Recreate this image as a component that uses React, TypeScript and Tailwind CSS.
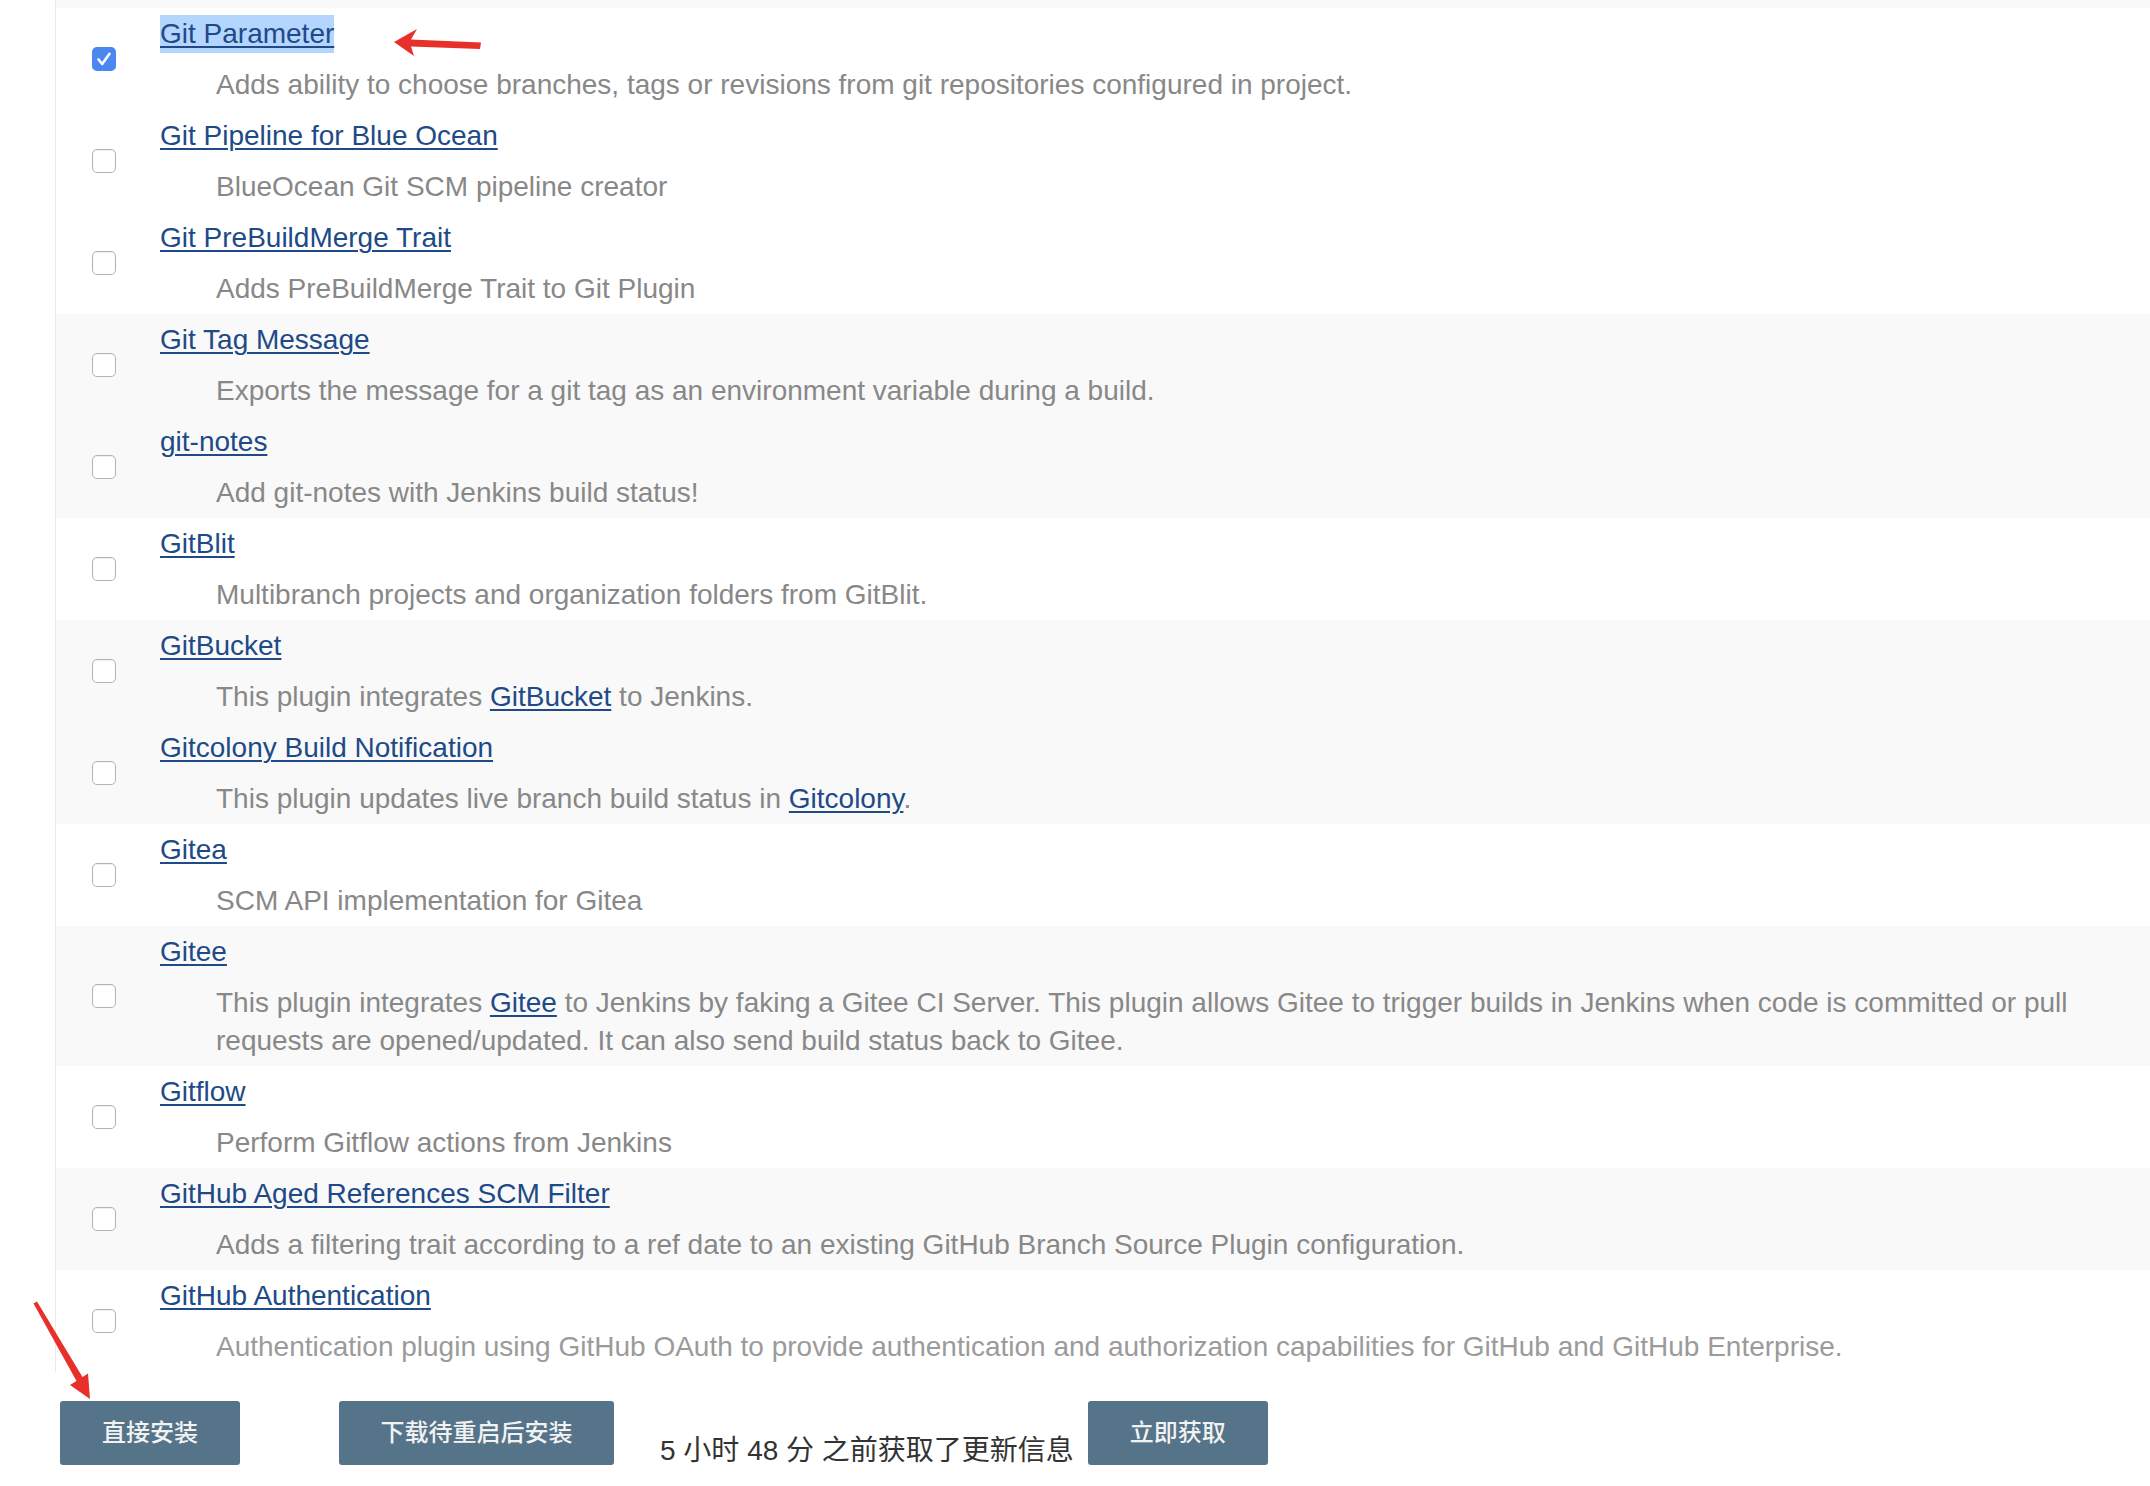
import React from "react";

type Row = {
  name: string;
  desc: React.ReactNode;
  grey?: boolean;
  checked?: boolean;
  highlight?: boolean;
  faded?: boolean;
};

function L({ children }: { children: React.ReactNode }) {
  return (
    <a href="#" className="text-[#204a87] underline decoration-[2px] underline-offset-[3px]">
      {children}
    </a>
  );
}

const rows: Row[] = [
  {
    name: "Git Parameter",
    desc: "Adds ability to choose branches, tags or revisions from git repositories configured in project.",
    checked: true,
    highlight: true,
  },
  { name: "Git Pipeline for Blue Ocean", desc: "BlueOcean Git SCM pipeline creator" },
  { name: "Git PreBuildMerge Trait", desc: "Adds PreBuildMerge Trait to Git Plugin" },
  {
    name: "Git Tag Message",
    desc: "Exports the message for a git tag as an environment variable during a build.",
    grey: true,
  },
  { name: "git-notes", desc: "Add git-notes with Jenkins build status!", grey: true },
  { name: "GitBlit", desc: "Multibranch projects and organization folders from GitBlit." },
  {
    name: "GitBucket",
    desc: (
      <>
        This plugin integrates <L>GitBucket</L> to Jenkins.
      </>
    ),
    grey: true,
  },
  {
    name: "Gitcolony Build Notification",
    desc: (
      <>
        This plugin updates live branch build status in <L>Gitcolony</L>.
      </>
    ),
    grey: true,
  },
  { name: "Gitea", desc: "SCM API implementation for Gitea" },
  {
    name: "Gitee",
    desc: (
      <>
        This plugin integrates <L>Gitee</L> to Jenkins by faking a Gitee CI Server. This plugin allows Gitee to
        trigger builds in Jenkins when code is committed or pull
        <br />
        requests are opened/updated. It can also send build status back to Gitee.
      </>
    ),
    grey: true,
  },
  { name: "Gitflow", desc: "Perform Gitflow actions from Jenkins" },
  {
    name: "GitHub Aged References SCM Filter",
    desc: "Adds a filtering trait according to a ref date to an existing GitHub Branch Source Plugin configuration.",
    grey: true,
  },
  {
    name: "GitHub Authentication",
    desc: "Authentication plugin using GitHub OAuth to provide authentication and authorization capabilities for GitHub and GitHub Enterprise.",
    faded: true,
  },
];

function Checkbox({ checked }: { checked?: boolean }) {
  if (checked) {
    return (
      <div className="w-6 h-6 rounded-[5px] bg-[#4a88f0] flex items-center justify-center">
        <svg width="20" height="20" viewBox="0 0 20 20" fill="none">
          <path d="M4.5 10.5 L8.2 15 L15.5 4.8" stroke="white" strokeWidth="2.6" strokeLinecap="round" strokeLinejoin="round" />
        </svg>
      </div>
    );
  }
  return <div className="w-6 h-6 rounded-[5px] border border-[#b3b3b3] bg-white shadow-[inset_0_1px_1px_rgba(0,0,0,0.06)]" />;
}

export default function App() {
  return (
    <div className="relative min-h-screen bg-white font-['Liberation_Sans','Noto_Sans_CJK_SC',sans-serif] text-[28px] leading-[38px]">
      <div className="ml-[55px] border-l border-[#e8e8e8]">
        <div className="h-[8px] bg-[#f9f9f9]" />
        {rows.map((r) => (
          <div key={r.name} className={`flex items-center ${r.grey ? "bg-[#f9f9f9]" : "bg-white"}`}>
            <div className="w-[104px] pl-[36px] shrink-0">
              <Checkbox checked={r.checked} />
            </div>
            <div className="pt-[7px] pb-[6px]">
              <div className="h-[38px] whitespace-nowrap">
                <a
                  href="#"
                  className={`text-[#204a87] underline decoration-[2px] underline-offset-[3px] ${
                    r.highlight ? "bg-[#b4d5fe] inline-block" : ""
                  }`}
                >
                  {r.name}
                </a>
              </div>
              <div
                className={`mt-[13px] pl-[56px] whitespace-nowrap ${
                  r.faded ? "text-[#9b9b9b]" : "text-[#888888]"
                }`}
              >
                {r.desc}
              </div>
            </div>
          </div>
        ))}
      </div>

      <div className="flex items-start pl-[60px] pt-[29px]">
        <button className="w-[180px] h-[64px] rounded-[3px] bg-[#557489] text-[#f2f2f2] text-[24px] font-medium">
          直接安装
        </button>
        <button className="ml-[99px] w-[275px] h-[64px] rounded-[3px] bg-[#557489] text-[#f2f2f2] text-[24px] font-medium">
          下载待重启后安装
        </button>
        <div className="ml-[46px] mt-[31px] text-[#333333] text-[28px] leading-[38px] whitespace-nowrap">
          5 小时 48 分 之前获取了更新信息
        </div>
        <button className="ml-[14px] w-[180px] h-[64px] rounded-[3px] bg-[#557489] text-[#f2f2f2] text-[24px] font-medium">
          立即获取
        </button>
      </div>

      <svg className="absolute left-0 top-0 pointer-events-none" width="2150" height="1486">
        <polygon
          points="394,42 417,29 411,39.5 481,42.5 480,49 411,46.5 414,56"
          fill="#e8302a"
        />
        <polygon
          points="33.5,1303.5 37,1301.5 82.5,1377 88,1373.5 90,1399 70,1385 76.5,1381"
          fill="#e8302a"
        />
      </svg>
    </div>
  );
}
